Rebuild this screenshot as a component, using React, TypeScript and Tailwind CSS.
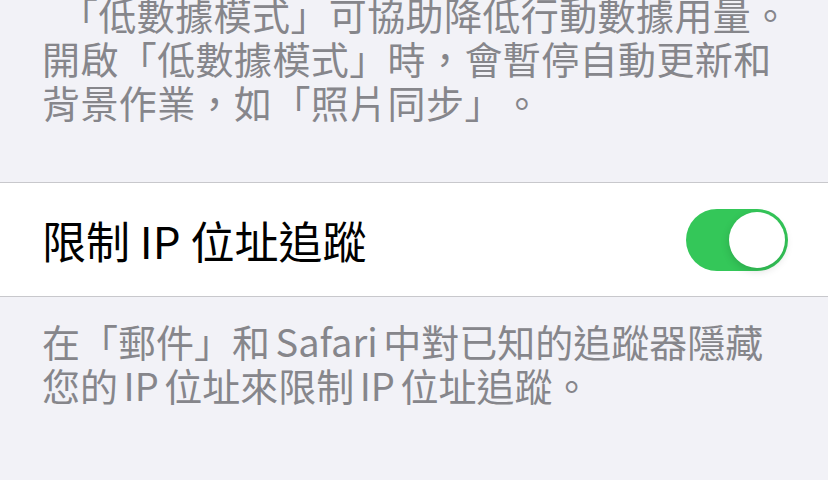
export default function App() {
  const font = { fontFamily: '"Noto Sans CJK TC", "Noto Sans", sans-serif' };
  return (
    <div className="h-[480px] w-[828px] overflow-hidden bg-[#f2f2f7] [text-spacing-trim:space-all]" style={font}>
      <p className="-mt-[8px] pl-[42px] pr-[26px] indent-[18px] text-[38px] leading-[44px] tracking-[0.4px] text-[#86868b]">
        「低數據模式」可協助降低行動數據用量。
        <br />
        開啟「低數據模式」時，會暫停自動更新和
        <br />
        背景作業，如「照片同步」。
      </p>
      <div className="mt-[58px] flex h-[115px] items-center justify-between border-y border-[#c8c8cc] bg-white pl-[42px] pr-[40px]">
        <span className="text-[44px] leading-none text-black">限制 IP 位址追蹤</span>
        <div className="flex h-[62px] w-[102px] items-center justify-end rounded-full bg-[#34c759] p-[3px]">
          <div className="h-[56px] w-[56px] rounded-full bg-white shadow-[0_3px_8px_rgba(0,0,0,0.15)]" />
        </div>
      </div>
      <p className="mt-[22px] px-[42px] text-[38px] leading-[44px] text-[#86868b] [word-spacing:-3px]">
        在「郵件」和 Safari 中對已知的追蹤器隱藏
        <br />
        您的 IP 位址來限制 IP 位址追蹤。
      </p>
    </div>
  );
}
